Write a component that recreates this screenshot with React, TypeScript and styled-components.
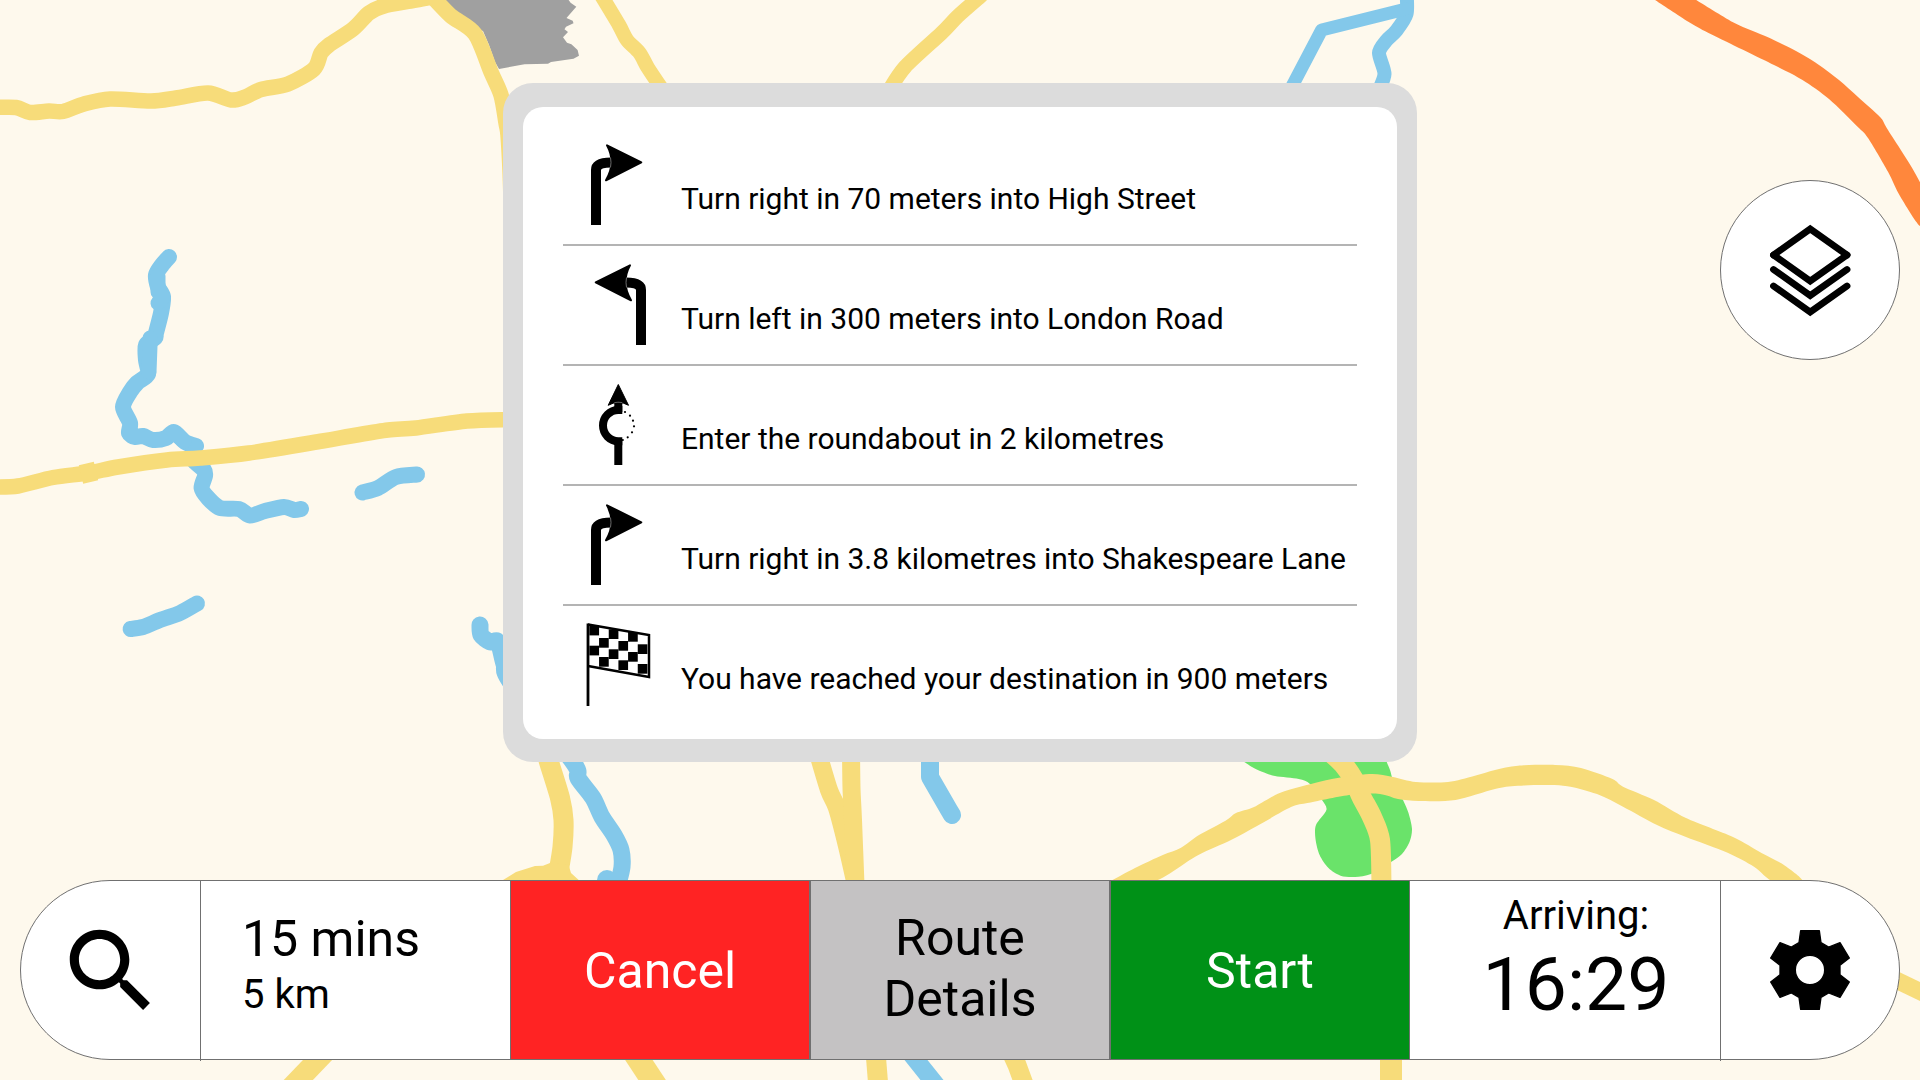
import React from "react";
import styled, { createGlobalStyle } from "styled-components";

const GlobalStyle = createGlobalStyle`
  *, *::before, *::after { box-sizing: border-box; }
  body { margin: 0; background: #fef9ed; font-family: Roboto, "Liberation Sans", sans-serif; color: #000; }
  button { font: inherit; color: inherit; cursor: pointer; }
`;

const Screen = styled.main`
  position: relative;
  width: 1920px;
  height: 1080px;
  overflow: hidden;
  display: flex;
  flex-direction: column;
  justify-content: space-between;
  padding: 83px 20px 20px;
`;

const MapCanvas = styled.svg`
  position: absolute;
  inset: 0;
  width: 1920px;
  height: 1080px;
`;

const Stage = styled.div`
  position: relative;
  display: grid;
  grid-template-columns: 1fr 914px 1fr;
  align-items: start;
`;

const Panel = styled.section`
  grid-column: 2;
  height: 679px;
  padding: 24px 20px 23px 20px;
  background: #dcdcdc;
  border-radius: 30px;
`;

const StepList = styled.ol`
  height: 100%;
  margin: 0;
  padding: 19px 40px 0;
  list-style: none;
  background: #fff;
  border-radius: 20px;
`;

const Step = styled.li`
  display: flex;
  align-items: flex-start;
  height: 120px;
  padding-left: 17px;
  border-bottom: 2px solid #b4b4b4;
  &:last-child { border-bottom: 0; }
`;

const StepIcon = styled.svg`
  flex: none;
  width: 80px;
  height: 90px;
  margin-top: 14px;
`;

const StepText = styled.span`
  margin: 55px 0 0 21px;
  font-size: 30px;
  line-height: 36px;
  letter-spacing: -0.01px;
  white-space: nowrap;
`;

const LayersButton = styled.button`
  justify-self: end;
  display: grid;
  place-items: center;
  width: 180px;
  height: 180px;
  margin-top: 97px;
  padding: 0;
  background: #fff;
  border: 1px solid #707070;
  border-radius: 50%;
`;

const Bar = styled.nav`
  position: relative;
  display: flex;
  height: 180px;
  background: #fff;
  border: 1px solid #707070;
  border-radius: 90px;
`;

const IconButton = styled.button<{ $side: "left" | "right" }>`
  display: grid;
  place-items: center;
  width: ${(p) => (p.$side === "left" ? 180 : 179)}px;
  height: 180px;
  padding: 0 0 ${(p) => (p.$side === "left" ? 0 : 2)}px;
  background: none;
  border: 0 solid #707070;
  border-${(p) => (p.$side === "left" ? "right" : "left")}-width: 1px;
`;

const Summary = styled.div`
  display: flex;
  flex-direction: column;
  width: 309px;
  padding: 28px 0 0 41px;
`;

const Duration = styled.span`
  font-size: 50px;
  line-height: 60px;
`;

const Distance = styled.span`
  margin-top: 1px;
  font-size: 40px;
  line-height: 50px;
`;

const Action = styled.button<{ $bg: string; $fg: string; $shift: number }>`
  width: 300px;
  height: 180px;
  margin-top: -1px;
  padding: ${(p) => Math.max(p.$shift, 0)}px 60px ${(p) => Math.max(-p.$shift, 0)}px;
  background: ${(p) => p.$bg};
  color: ${(p) => p.$fg};
  border: 1px solid #707070;
  font-size: 50px;
  line-height: 61px;
`;

const Arrival = styled.div`
  display: flex;
  flex-direction: column;
  align-items: center;
  width: 310px;
  padding: 11px 0 0 22px;
`;

const ArrivalLabel = styled.span`
  font-size: 40px;
  line-height: 48px;
`;

const ArrivalTime = styled.span`
  margin-top: -1px;
  font-size: 75px;
  line-height: 90px;
`;

const GREY = "#a0a0a0";
const ROAD = "#f7dc7a";
const WATER = "#83c8ea";
const PARK = "#6ae36a";
const MOTORWAY = "#ff873c";

/** Turns a flat "x y,x y" list into a curve that passes through every point. */
function curve(list: string) {
  const n = list.split(/[ ,]+/).map(Number);
  const pts: [number, number][] = [];
  for (let i = 0; i < n.length; i += 2) pts.push([n[i], n[i + 1]]);
  let d = `M${pts[0][0]} ${pts[0][1]}`;
  for (let i = 0; i < pts.length - 1; i++) {
    const a = pts[i - 1] ?? pts[i];
    const b = pts[i];
    const c = pts[i + 1];
    const e = pts[i + 2] ?? c;
    const k = 7;
    d += `C${b[0] + (c[0] - a[0]) / k} ${b[1] + (c[1] - a[1]) / k} ${c[0] - (e[0] - b[0]) / k} ${
      c[1] - (e[1] - b[1]) / k
    } ${c[0]} ${c[1]}`;
  }
  return d;
}

function CityMap() {
  return (
    <MapCanvas viewBox="0 0 1920 1080" aria-hidden="true">
      <rect width="1920" height="1080" fill="#fef9ed" />
      <path
        fill={GREY}
        d="M441 0L480 30L483 31L489 45L495 62L499 69L524.5 64.3L548 63.7L551 62L573.5 58.7L579 55.7L577.6 50L571.4 44.3L567 42.7L563 37.3L568 32L564.5 29.3L566 26.7L573.5 23.3L572.7 20.7L566.5 18L576.3 6.7L570.6 2.7L568.6 0Z"
      />
      <path
        fill={PARK}
        d={curve(
          "1243 761,1252 767,1262 771.7,1275 776,1298.7 779,1310 784,1322 800,1326.4 810,1316 825,1315.5 839,1319.6 855,1328.5 868,1340.6 875.7,1355 877,1371 874,1391 862,1402 854,1409.6 841.7,1412 829,1408.5 813,1403 800,1393 780,1390 770,1385 758"
        )}
      />
      <g fill="none" stroke={WATER} strokeWidth="16" strokeLinecap="round" strokeLinejoin="round">
        <path
          d={curve(
            "169 257,162 265,156 275,158 287,163 297,161 313,156 333,155 338,146 345,146 360,148 374,137 383,130 392,123 407,130 423,129 433,135 437,143 436,153 440,166 438,174 432,185 442,196 446"
          )}
        />
        <path d="M158 276V292L163 297L158 303M174 433L184 441M150 338V346L149 372" strokeWidth="15" />
        <path d={curve("195 462,204 470,205 476,201.600 488,208 498,220 508,239 509,250 515.500,265 511,284 507,294 510,301 509")} />
        <path d={curve("362.500 492.500,378 488,396 477,417 474.500")} />
        <path d={curve("130.600 629,143 627,160 620,180 613,197 603.500")} />
        <path strokeWidth="17" d={curve("480 625,481 635,490 642,498 642,504 664,511 683,573 762,578 778,593 798,602 817,614 835,621 850,622 867,618 884")} />
        <path strokeWidth="20" d="M607 880L615 888" />
        <path strokeWidth="18" d="M930 750V777L949 810L952 815" />
        <path strokeWidth="14" d={curve("1406.500 -8,1406.500 14,1396 31,1386 41,1379 53,1384.500 74,1378 92")} />
        <path strokeWidth="13" d="M1406 9L1321.600 30L1288 94" />
        <path strokeWidth="18" d="M900 1040L940 1090" />
      </g>
      <g fill="none" stroke={ROAD} strokeWidth="15.500" strokeLinejoin="round">
        <path
          d={curve(
            "-5 107.500,16 107.500,30 112.500,49 111,63 111.500,84 104,110 99,151 101,176 98,208 93,231 100,245 97,261 89.500,288 84,314 69,321 53,329 45,353 29,369 13,384 6,408 1.500,427 -2,433 -2,451 16,475 34,491 72,501 95,506 123,508 135,510 170,511 200"
          )}
        />
        <path d={curve("-5 487,18 486,53 477.500,88 473,118 467,167 460,200 458,249 453,322.500 441,351 436,388 430,416 428,467 421,510 419.500")} />
        <path strokeWidth="19" d="M81 474.500L96 471" />
        <path strokeWidth="14.500" d={curve("601 -5,619 25,627 40,639.600 53,648 68,664 92")} />
        <path strokeWidth="14.500" d={curve("982 -5,958 16,941.600 33,905 67,888 92")} />
        <path strokeWidth="20" d={curve("546 750,549 762,560 798,563.500 820,562.500 847,558 875")} />
        <path strokeWidth="18" d={curve("817 750,829 790,837 808,847 846,857 890")} />
        <path strokeWidth="18" d={curve("851 750,851.500 788,853 820,855.500 885")} />
        <path strokeWidth="20" d={curve("1328 750,1343 764,1354 780,1361.500 797,1372 817,1380 840,1381.500 885")} />
        <path strokeWidth="21" d="M330 1047L282 1097" />
        <path strokeWidth="23" d="M627 1042L662 1095" />
        <path strokeWidth="20" d="M875 1045L879 1095" />
        <path strokeWidth="19" d="M1007 1043L1017 1065L1028 1095" />
        <path strokeWidth="22" d="M1391 1050V1090" />
      </g>
      <path fill={ROAD} d="M498 883L503 880L516 872L535 866L543 865.700L550 863L568.600 865L571 873L582 883Z" />
      <path fill={ROAD} d="M1895 970L1920 982V1001L1895 989Z" />
      <path
        fill={ROAD}
        d={curve(
          "1109 882,1135 868,1162.800 855,1181 847.700,1199 835,1225.500 820.700,1236 813,1254 807,1280.400 792.700,1319.600 781.700,1343 777,1372 774,1393 777,1416 782,1448 782,1474 776,1495 770,1518 765.700,1555 765,1581 768,1612.500 779,1623 786.700,1654 800,1686 818,1733 837,1761.500 853,1785 865.700,1803 882,1774 882,1754 866.700,1727.600 852.700,1686 837,1657 825,1623 806.700,1597 794,1563 785.700,1518 785.700,1495 789,1455.600 800,1419 801,1398 799,1380 794,1351 794.700,1309 802.700,1291 807,1257 826,1231 840,1197 855.700,1153 882,1109 882"
        )}
      />
      <path
        fill={MOTORWAY}
        d={curve(
          "1693 -2,1735 23.300,1768 37.300,1796 51,1815 62.300,1839 80,1858 97,1880 117,1888 130,1922 187,1922 227,1900.400 196.700,1888 171.700,1868 138,1857.600 126.700,1829 99,1802.500 80,1774 65,1712.700 35,1690 22.700,1652 -2"
        )}
      />
    </MapCanvas>
  );
}

function TurnArrow() {
  return (
    <>
      <path d="M596 225V170Q596 162.500 611 162.500" fill="none" stroke="#000" strokeWidth="10" />
      <path
        d="M607 145.300L641.300 162.300L606 180.300Q616.500 162.500 607 145.300Z"
        stroke="#000"
        strokeWidth="2"
        strokeLinejoin="round"
      />
      <path d="M610.500 157.500Q611.500 162.500 610.500 167.500" fill="none" stroke="#888" strokeWidth=".8" />
    </>
  );
}

const FLAG_COLUMNS = [
  [625.7, 645.7],
  [638, 657],
  [629.3, 649.3],
  [641, 660.3],
  [632, 652],
  [644.3, 664],
];

type Kind = "right" | "left" | "roundabout" | "flag";

function StepGlyph({ kind }: { kind: Kind }) {
  if (kind === "right") {
    return (
      <StepIcon viewBox="580 140 80 90">
        <TurnArrow />
      </StepIcon>
    );
  }
  if (kind === "left") {
    return (
      <StepIcon viewBox="580 140 80 90">
        <g transform="translate(1237 0) scale(-1 1)">
          <TurnArrow />
        </g>
      </StepIcon>
    );
  }
  if (kind === "roundabout") {
    return (
      <StepIcon viewBox="580 380 80 90">
        <path d="M618.300 384.500L628.500 405.300Q618.300 399.500 608.200 405.300Z" stroke="#000" strokeLinejoin="round" />
        <path d="M618.300 403V412M618.300 440V465" stroke="#000" strokeWidth="8" />
        <path d="M622.300 410H618.300A15.300 15.600 0 0 0 618.300 441.200H622.300" fill="none" stroke="#000" strokeWidth="8" />
        <path d="M614.300 402.600Q618.300 401.800 622.300 402.600" fill="none" stroke="#888" strokeWidth=".7" />
        {[[625, 412], [630, 415.7], [633, 420.7], [634, 426.3], [632, 432.3], [627.7, 437.3], [622.8, 440]].map(
          ([x, y]) => (
            <circle key={y} cx={x} cy={y} r="1.100" />
          )
        )}
      </StepIcon>
    );
  }
  return (
    <StepIcon viewBox="580 620 80 90">
      <path d="M588 624.500L649 635V677L588 666" fill="none" stroke="#000" strokeWidth="2.500" />
      <path d="M588 623.500V706" stroke="#000" strokeWidth="2.800" />
      {FLAG_COLUMNS.map((rows, column) =>
        rows.map((y) => <rect key={`${column}-${y}`} x={589.4 + 9.67 * column} y={y} width="9.670" height="9.700" />)
      )}
    </StepIcon>
  );
}

const STEPS: { kind: Kind; text: string }[] = [
  { kind: "right", text: "Turn right in 70 meters into High Street" },
  { kind: "left", text: "Turn left in 300 meters into London Road" },
  { kind: "roundabout", text: "Enter the roundabout in 2 kilometres" },
  { kind: "right", text: "Turn right in 3.8 kilometres into Shakespeare Lane" },
  { kind: "flag", text: "You have reached your destination in 900 meters" },
];

export default function App() {
  return (
    <Screen>
      <GlobalStyle />
      <CityMap />
      <Stage>
        <Panel>
          <StepList>
            {STEPS.map((step) => (
              <Step key={step.text}>
                <StepGlyph kind={step.kind} />
                <StepText>{step.text}</StepText>
              </Step>
            ))}
          </StepList>
        </Panel>
        <LayersButton aria-label="Layers">
          <svg width="100" height="100" viewBox="1760 220 100 100" fill="none" stroke="#000" strokeWidth="6.800" strokeLinecap="round">
            <path d="M1773.500 255L1810.200 229L1847 255" />
            <path d="M1773.500 255L1810.200 281L1847 255" />
            <path d="M1773.500 269.500L1810.200 295.500L1847 269.500" />
            <path d="M1773.500 286L1810.200 312L1847 286" />
          </svg>
        </LayersButton>
      </Stage>
      <Bar>
        <IconButton $side="left" aria-label="Search">
          <svg width="110" height="110" viewBox="0 0 24 24">
            <path d="M15.500 14h-.79l-.28-.27C15.410 12.590 16 11.110 16 9.500 16 5.910 13.090 3 9.500 3S3 5.910 3 9.500 5.910 16 9.500 16c1.610 0 3.090-.59 4.230-1.570l.27.28v.79l5 4.990L20.490 19l-4.990-5zm-6 0C7.010 14 5 11.990 5 9.500S7.010 5 9.500 5 14 7.010 14 9.500 11.990 14 9.500 14z" />
          </svg>
        </IconButton>
        <Summary>
          <Duration>15 mins</Duration>
          <Distance>5 km</Distance>
        </Summary>
        <Action $bg="#ff2323" $fg="#fff" $shift={2}>Cancel</Action>
        <Action $bg="#c4c2c3" $fg="#000" $shift={-2}>Route Details</Action>
        <Action $bg="#009117" $fg="#fff" $shift={2}>Start</Action>
        <Arrival>
          <ArrivalLabel>Arriving:</ArrivalLabel>
          <ArrivalTime>16:29</ArrivalTime>
        </Arrival>
        <IconButton $side="right" aria-label="Settings">
          <svg width="80" height="80" viewBox="-120 -120 240 240">
            <path
              fillRule="evenodd"
              stroke="#000"
              strokeWidth="4"
              strokeLinejoin="round"
              d="M-28 -118H28L33 -82L56 -69L90 -82L118 -36L90 -14V14L118 36L90 82L56 69L33 82L28 118H-28L-33 82L-56 69L-90 82L-118 36L-90 14V-14L-118 -36L-90 -82L-56 -69L-33 -82ZM44 0A44 44 0 1 0 -44 0A44 44 0 1 0 44 0Z"
            />
          </svg>
        </IconButton>
      </Bar>
    </Screen>
  );
}
